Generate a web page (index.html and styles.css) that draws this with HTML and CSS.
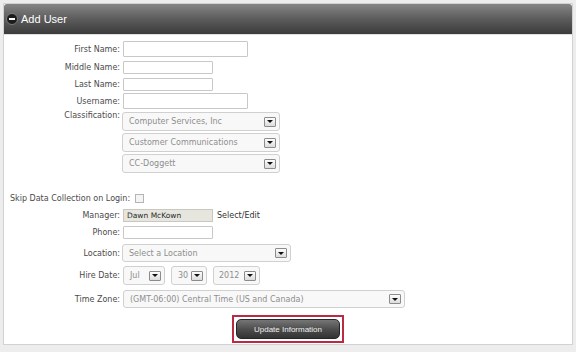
FILE: index.html
```html
<!DOCTYPE html>
<html>
<head>
  <meta charset="UTF-8">
  <title>Add User</title>
  <link rel="stylesheet" href="styles.css">
</head>
<body>
  <div class="panel">
    <div class="panel-head">
      <svg class="toggle" width="12" height="12" viewBox="0 0 12 12">
        <circle cx="6" cy="6" r="5.5" fill="#1c1c1c" stroke="#8c8c8c" stroke-width="0.8"/>
        <rect x="3" y="5" width="6" height="2" fill="#fff"/>
      </svg>
      <span class="title">Add User</span>
    </div>

    <form class="panel-body">
      <div class="row r-first">
        <label>First Name:</label>
        <input type="text" class="wide">
      </div>
      <div class="row r-middle">
        <label>Middle Name:</label>
        <input type="text" class="short">
      </div>
      <div class="row r-last">
        <label>Last Name:</label>
        <input type="text" class="short">
      </div>
      <div class="row r-user">
        <label>Username:</label>
        <input type="text" class="wide">
      </div>
      <div class="row r-class">
        <label class="top">Classification:</label>
        <div class="stack">
          <div class="select s-class"><span>Computer Services, Inc</span><i class="arrow"></i></div>
          <div class="select s-class"><span>Customer Communications</span><i class="arrow"></i></div>
          <div class="select s-class"><span>CC-Doggett</span><i class="arrow"></i></div>
        </div>
      </div>

      <div class="skip">
        <span>Skip Data Collection on Login:</span>
        <input type="checkbox" class="check">
      </div>

      <div class="row r-manager">
        <label>Manager:</label>
        <div class="readonly">Dawn McKown</div>
        <a class="edit">Select/Edit</a>
      </div>
      <div class="row r-phone">
        <label>Phone:</label>
        <input type="text" class="short">
      </div>
      <div class="row r-location">
        <label>Location:</label>
        <div class="select s-location"><span>Select a Location</span><i class="arrow"></i></div>
      </div>
      <div class="row r-date">
        <label>Hire Date:</label>
        <div class="dates">
          <div class="select s-month"><span>Jul</span><i class="arrow"></i></div>
          <div class="select s-day"><span>30</span><i class="arrow"></i></div>
          <div class="select s-year"><span>2012</span><i class="arrow"></i></div>
        </div>
      </div>
      <div class="row r-zone">
        <label>Time Zone:</label>
        <div class="select s-zone"><span>(GMT-06:00) Central Time (US and Canada)</span><i class="arrow"></i></div>
      </div>

      <div class="actions">
        <div class="highlight">
          <button type="button">Update Information</button>
        </div>
      </div>
    </form>
  </div>
</body>
</html>
```

FILE: styles.css
```css
/* Page */
body, html {
  margin: 0;
  padding: 0;
  background-color: #ededed;
  font-family: "DejaVu Sans", Verdana, sans-serif;
  font-size: 8px;
  color: #4a4a4a;
}

/* Panel box */
.panel {
  width: 570px;
  margin: 3px 0 0 3px;
  box-sizing: border-box;
  background-color: #fff;
  border: 1px solid #d2d2d2;
}

.panel-head {
  height: 30px;
  display: flex;
  align-items: center;
  padding-left: 2px;
  background: linear-gradient(#858585, #5c5c5c 50%, #3b3b3b);
  border-radius: 3px 3px 0 0;
  border-bottom: 1px solid #e0e0e0;
}

.toggle {
  margin-right: 3px;
}

.title {
  font-family: "Liberation Sans", Arial, sans-serif;
  font-size: 11px;
  color: #fff;
}

/* Form rows */
.panel-body {
  margin: 0;
  padding: 6px 0 1px 0;
}

.row {
  display: flex;
  align-items: center;
}

.row label {
  width: 116px;
  padding-right: 3px;
  text-align: right;
  flex-shrink: 0;
}

.row label.top {
  align-self: flex-start;
  line-height: 10px;
  margin-top: -1px;
}

.r-first { margin-top: 0; }
.r-middle { margin-top: 4px; }
.r-last { margin-top: 4px; }
.r-user { margin-top: 2px; }
.r-class { margin-top: 3px; align-items: flex-start; }
.r-manager { margin-top: 6px; }
.r-phone { margin-top: 4px; }
.r-location { margin-top: 5px; }
.r-date { margin-top: 4px; }
.r-zone { margin-top: 5px; }

/* Text inputs */
input[type="text"] {
  box-sizing: border-box;
  margin: 0;
  padding: 0 3px;
  border: 1px solid #c8c8c8;
  border-radius: 1px;
  background-color: #fff;
  font-family: inherit;
  font-size: 8px;
}

input.wide {
  width: 125px;
  height: 16px;
}

input.short {
  width: 90px;
  height: 13px;
}

/* Drop downs */
.stack {
  display: flex;
  flex-direction: column;
  gap: 2px;
  margin-left: -1px;
}

.select {
  box-sizing: border-box;
  display: flex;
  align-items: center;
  justify-content: space-between;
  height: 19px;
  padding: 0 3px 0 6px;
  border: 1px solid #d0d0d0;
  border-radius: 3px;
  background-color: #f8f8f8;
  color: #8e8e8e;
  white-space: nowrap;
}

.arrow {
  box-sizing: border-box;
  width: 12px;
  height: 10px;
  display: flex;
  align-items: center;
  justify-content: center;
  border: 1px solid #8c8c8c;
  border-radius: 1px;
  background: linear-gradient(#fdfdfd, #dcdcdc);
  flex-shrink: 0;
}

.arrow::after {
  content: "";
  border-left: 3px solid transparent;
  border-right: 3px solid transparent;
  border-top: 3px solid #111;
}

.s-class { width: 158px; }
.s-location { width: 169px; height: 18px; margin-left: -1px; }
.s-zone { width: 282px; height: 18px; }

.dates {
  display: flex;
  gap: 6px;
}

.s-month { width: 42px; }
.s-day { width: 36px; }
.s-year { width: 47px; padding-left: 5px; }
.s-day span, .s-year span { margin-right: 2px; }

/* Skip collection line */
.skip {
  display: flex;
  align-items: center;
  margin-top: 21px;
  padding-left: 6px;
  height: 9px;
}

.check {
  -webkit-appearance: none;
  appearance: none;
  width: 9px;
  height: 9px;
  margin: 0 0 0 5px;
  border: 1px solid #b4b4b4;
  background-color: #f4f4f4;
}

/* Manager */
.readonly {
  box-sizing: border-box;
  width: 90px;
  height: 13px;
  line-height: 11px;
  padding-left: 3px;
  border: 1px solid #c8c8c0;
  background-color: #e6e6de;
  color: #2a2a2a;
  font-size: 7.5px;
}

.edit {
  margin-left: 4px;
  color: #333;
}

/* Submit */
.actions {
  display: flex;
  justify-content: center;
  margin-top: 7px;
}

.highlight {
  padding: 2px;
  border: 2px solid #b92a44;
}

button {
  display: block;
  width: 104px;
  height: 20px;
  border: 1px solid #262626;
  border-radius: 5px;
  background: linear-gradient(#767676, #4e4e4e 50%, #333);
  color: #eee;
  font-family: "Liberation Sans", Arial, sans-serif;
  font-size: 8px;
  cursor: pointer;
}
```
